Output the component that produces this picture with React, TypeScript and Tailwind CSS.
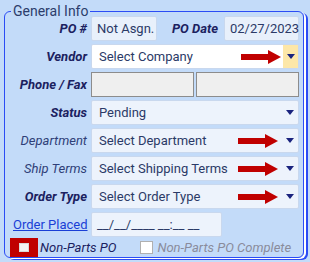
import React from "react";

function Arrow() {
  return (
    <svg width="40" height="16" viewBox="0 0 40 16" className="shrink-0">
      <rect x="0" y="5" width="28" height="6" fill="#c00000" />
      <polygon points="27,1 40,8 27,15" fill="#c00000" />
    </svg>
  );
}

function Caret() {
  return (
    <svg width="8" height="5" viewBox="0 0 8 5">
      <polygon points="0,0 8,0 4,5" fill="#1a237e" />
    </svg>
  );
}

function Label({ children, bold = true }: { children: React.ReactNode; bold?: boolean }) {
  return (
    <div
      className={`w-[82px] shrink-0 whitespace-nowrap text-right italic ${
        bold ? "font-bold text-[#1b2160]" : "text-[#2f3f78]"
      }`}
    >
      {children}
    </div>
  );
}

function Select({ text, arrow = false }: { text: string; arrow?: boolean }) {
  return (
    <div className="flex h-[25px] min-w-0 flex-1 items-center rounded-[2px] border border-[#c9d8ee] bg-[#edf3fc] pl-[7px] pr-[4px]">
      <span className="flex-1 whitespace-nowrap text-[#2b3a67]">{text}</span>
      {arrow && <Arrow />}
      <div className="ml-[8px] flex w-[8px] justify-center">
        <Caret />
      </div>
    </div>
  );
}

export default function App() {
  return (
    <div
      className="h-[262px] w-[310px] overflow-hidden bg-[#c3dbf9] pl-[4px] pt-[4px] text-[13px]"
      style={{ fontFamily: 'Roboto, "Liberation Sans", sans-serif' }}
    >
      <fieldset className="h-[254px] w-[300px] min-w-0 rounded-[6px] border border-[#2b4cf5] pr-[4px] shadow-[2px_1px_0_0_#ffffff,4px_2px_0_0_#2b4cf5]">
        <legend className="ml-[6px] px-[2px] text-[14px] leading-[14px] text-[#2c3d6b]">General Info</legend>

        <div className="mt-[-2px] flex flex-col gap-[3px]">
          <div className="flex h-[25px] items-center gap-[4px]">
            <Label>PO #</Label>
            <div className="flex h-[25px] w-[66px] items-center rounded-[2px] border border-[#c9d8ee] bg-[#e8f0fb] pl-[5px] text-[#2b3a67]">
              Not Asgn.
            </div>
            <div className="flex-1 whitespace-nowrap pr-[2px] text-right font-bold italic text-[#1b2160]">PO Date</div>
            <div className="flex h-[25px] w-[75px] items-center rounded-[2px] border border-[#c9d8ee] bg-[#e8f0fb] pl-[5px] text-[#2b3a67]">
              02/27/2023
            </div>
          </div>

          <div className="flex h-[25px] items-center gap-[4px]">
            <Label>Vendor</Label>
            <div className="flex h-[25px] flex-1 items-center rounded-[2px] border border-[#c9d8ee] bg-white pl-[7px]">
              <span className="flex-1 text-[#2b3a67]">Select Company</span>
              <Arrow />
              <div className="ml-[2px] flex h-full w-[15px] items-center justify-center bg-[#fde7a8]">
                <Caret />
              </div>
            </div>
          </div>

          <div className="flex h-[25px] items-center gap-[4px]">
            <Label>Phone / Fax</Label>
            <div className="flex flex-1 gap-[2px]">
              <div className="h-[25px] flex-1 border border-[#8c8c8c] bg-[#efefef]" />
              <div className="h-[25px] flex-1 border border-[#8c8c8c] bg-[#efefef]" />
            </div>
          </div>

          <div className="flex h-[25px] items-center gap-[4px]">
            <Label>Status</Label>
            <Select text="Pending" />
          </div>

          <div className="flex h-[25px] items-center gap-[4px]">
            <Label bold={false}>Department</Label>
            <Select text="Select Department" arrow />
          </div>

          <div className="flex h-[25px] items-center gap-[4px]">
            <Label bold={false}>Ship Terms</Label>
            <Select text="Select Shipping Terms" arrow />
          </div>

          <div className="flex h-[25px] items-center gap-[4px]">
            <Label>Order Type</Label>
            <Select text="Select Order Type" arrow />
          </div>

          <div className="flex h-[25px] items-center gap-[4px]">
            <div className="w-[82px] shrink-0 whitespace-nowrap pl-[8px] text-[#1a3fd6] underline">Order Placed</div>
            <div className="flex h-[25px] w-[131px] items-center rounded-[2px] border border-[#c9d8ee] bg-[#edf3fc] pl-[5px] text-[#2b3a67]">
              __/__/____ __:__ __
            </div>
          </div>
        </div>

        <div className="mt-[1px] flex h-[19px] items-center">
          <div className="ml-[5px] flex h-[19px] w-[28px] items-center justify-center bg-[#c00000]">
            <div className="h-[9px] w-[10px] border border-[#d8d8d8] bg-[#f4f4f4]" />
          </div>
          <span className="ml-[2px] whitespace-nowrap italic text-[#1b2160]">Non-Parts PO</span>
          <div className="ml-[24px] h-[13px] w-[13px] shrink-0 border border-[#b0b0b0] bg-white" />
          <span className="ml-[4px] whitespace-nowrap italic text-[#8a8c9c]">Non-Parts PO Complete</span>
        </div>
      </fieldset>
    </div>
  );
}
